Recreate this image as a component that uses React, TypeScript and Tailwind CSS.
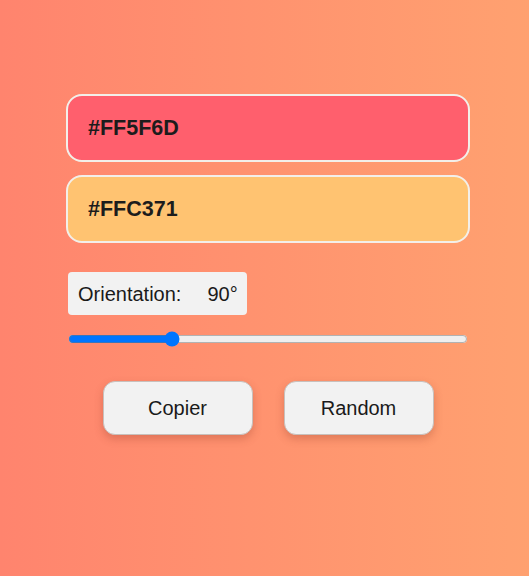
import { useState } from "react";

export default function App() {
  const [angle, setAngle] = useState(90);
  const [c1, setC1] = useState("#FF5F6D");
  const [c2, setC2] = useState("#FFC371");

  return (
    <div
      className="min-h-[576px] w-full bg-gradient-to-r from-[#ff846e] to-[#ffa170] font-['Liberation_Sans',Arial,sans-serif]"
    >
      <div className="ml-[66px] w-[404px] pt-[94px] flex flex-col">
        <input
          value={c1}
          onChange={(e) => setC1(e.target.value)}
          className="h-[68px] w-full rounded-[16px] border-2 border-[#f3efe9] bg-[#ff5f6d] pl-[20px] text-[21.5px] font-bold text-[#1c1c1c] outline-none"
        />
        <input
          value={c2}
          onChange={(e) => setC2(e.target.value)}
          className="mt-[13px] h-[68px] w-full rounded-[16px] border-2 border-[#f3efe9] bg-[#ffc371] pl-[20px] text-[21.5px] font-bold text-[#1c1c1c] outline-none"
        />

        <div className="mt-[29px] ml-[2px] flex h-[43px] w-[179px] items-center rounded-[4px] bg-[#f2f2f2] pl-[10px] text-[20px] text-[#1a1a1a]">
          <span>Orientation:</span>
          <span className="ml-[26px]">{angle}°</span>
        </div>

        <input
          type="range"
          min={0}
          max={360}
          value={angle}
          onChange={(e) => setAngle(Number(e.target.value))}
          className="mt-[16px] ml-[2px] w-[400px] accent-[#0075ff]"
        />

        <div className="mt-[34px] flex justify-center gap-[31px]">
          <button className="h-[54px] w-[150px] rounded-[12px] border border-[#c8c0bc] bg-[#f2f2f2] text-[20px] text-[#1a1a1a] shadow-[0_4px_8px_rgba(150,60,40,0.3)]">
            Copier
          </button>
          <button className="h-[54px] w-[150px] rounded-[12px] border border-[#c8c0bc] bg-[#f2f2f2] text-[20px] text-[#1a1a1a] shadow-[0_4px_8px_rgba(150,60,40,0.3)]">
            Random
          </button>
        </div>
      </div>
    </div>
  );
}
